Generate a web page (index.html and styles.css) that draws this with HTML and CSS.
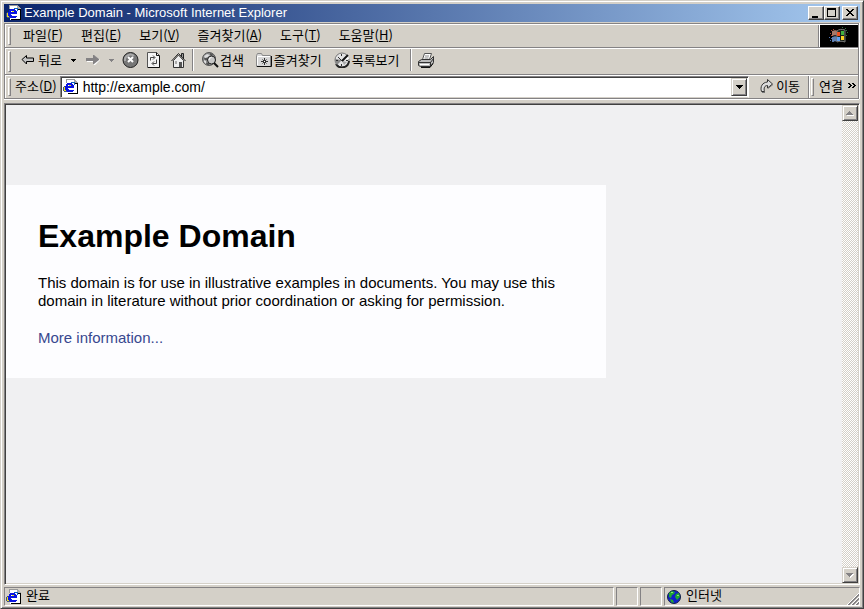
FILE: index.html
```html
<!DOCTYPE html>
<html lang="ko">
<head>
  <meta charset="UTF-8" />
  <meta name="viewport" content="width=device-width, initial-scale=1.0"/>
  <title>Example Domain - Microsoft Internet Explorer</title>
  <link rel="stylesheet" href="styles.css">
</head>
<body>
  <svg class="sprites" aria-hidden="true">
    <symbol id="icon-page" viewBox="0 0 16 16">
      <path d="M4 1h8l3 3v11H4z" fill="#fff"/>
      <path d="M3 0h9v1H4v3H3z" fill="#999"/>
      <path d="M11 1h2v1h1v1h1v1h-4z" fill="#aaa"/>
      <path d="M11 4h4v11H5v-1h9V5h-3z" fill="#000"/>
      <path d="M4 4h5v1h1v1h1v3H5v1h1v1h5v1h-1v1H4v-1H3v-1H2V7h1V5h1zM5 6v1h3V6z" fill="#0a14e0" fill-rule="evenodd"/>
      <path d="M8 3h4v3h-1V4H8z" fill="#1060c0"/>
      <path d="M1 7h1v1H1zM0 8h1v4H0zM0 12h4v1H1v-1z" fill="#405080"/>
      <path d="M1 8h1v3H1zM1 11h2v1H1zM6 6h2v1H6z" fill="#e8e020"/>
    </symbol>
    <symbol id="icon-down" viewBox="0 0 7 4">
      <path d="M0 0h7v1H6v1H5v1H4v1H3V3H2V2H1V1H0z"/>
    </symbol>
  </svg>

  <div class="window">
    <header class="title-bar">
      <svg class="icon"><use href="#icon-page"/></svg>
      <span class="title">Example Domain - Microsoft Internet Explorer</span>
      <div class="title-buttons">
        <button class="title-btn" aria-label="최소화"><svg width="12" height="10"><path d="M2 8h6v2H2z"/></svg></button>
        <button class="title-btn" aria-label="최대화"><svg width="12" height="10"><path d="M1 0h9v9H1zM2 2v6h7V2z" fill-rule="evenodd"/></svg></button>
        <button class="title-btn close" aria-label="닫기"><svg width="12" height="10"><path d="M2 1h2v1h1v1h2V2h1V1h2v1H9v1H8v1H7v1h1v1h1v1h1v1H8V7H7V6H5v1H4v1H2V7h1V6h1V5h1V4H4V3H3V2H2z"/></svg></button>
      </div>
    </header>

    <div class="rebar">
      <div class="row menu-row">
        <nav class="band menu-band">
          <span class="grip"></span>
          <button class="menu-btn">파일(<u>F</u>)</button>
          <button class="menu-btn">편집(<u>E</u>)</button>
          <button class="menu-btn">보기(<u>V</u>)</button>
          <button class="menu-btn">즐겨찾기(<u>A</u>)</button>
          <button class="menu-btn">도구(<u>T</u>)</button>
          <button class="menu-btn">도움말(<u>H</u>)</button>
        </nav>
        <div class="throbber">
          <svg width="22" height="18" viewBox="0 0 22 18">
            <path d="M3 3h1v1H3zM5 2h1v1H5zM2 6h1v1H2zM4 5h2v1H4zM3 8h2v1H3z" fill="#b04030"/>
            <path d="M1 10h1v1H1zM3 11h2v1H3zM2 13h1v1H2zM4 14h2v1H4z" fill="#5070b0"/>
            <path d="M14 0h1v1h-1zM17 1h1v1h-1zM18 3h1v1h-1zM19 5h1v1h-1zM18 8h1v1h-1z" fill="#307040"/>
            <path d="M4 4c3-1 4-1 6 0v5c-2-1-4-1-6 0z" fill="#a87868"/>
            <path d="M4 10c3-1 4-1 6 0v5c-2-1-4-1-6 0z" fill="#6080b0"/>
            <path d="M9 4c2-2 5-2 8-1v12c-3-1-5-1-8 0z" fill="#182018" stroke="#777" stroke-width="1"/>
            <path d="M9 5h3v4H9z" fill="#f05020"/>
            <path d="M13 4h3v4h-3z" fill="#40b040"/>
            <path d="M9 10h3v4H9z" fill="#60a0f0"/>
            <path d="M13 9h3v4h-3z" fill="#f8d020"/>
          </svg>
        </div>
      </div>

      <div class="row tool-row">
        <div class="band">
          <span class="grip"></span>
          <button class="tool-btn back">
            <svg width="14" height="12" viewBox="0 0 14 12"><path d="M1 5.500L5.500 1.500V4H12.500V7.500H5.500V10z" fill="#c4c4c4" stroke="#000"/></svg>
            뒤로
          </button>
          <button class="tool-btn drop" aria-label="뒤로 목록"><svg width="5" height="3"><path d="M0 0h5v1H4v1H3v1H2V2H1V1H0z"/></svg></button>
          <button class="tool-btn forward" aria-label="앞으로">
            <svg width="14" height="12" viewBox="0 0 14 12"><path d="M1 5h7V2h1l5 4-5 5H8V8H1z" fill="#fff"/><path d="M0 4h7V1h1l5 4v1l-5 4H7V7H0z" fill="#848284"/></svg>
          </button>
          <button class="tool-btn drop off" aria-label="앞으로 목록"><svg width="5" height="3"><path d="M0 0h5v1H4v1H3v1H2V2H1V1H0z"/></svg></button>
          <button class="tool-btn stop" aria-label="중지">
            <svg width="17" height="16" viewBox="0 0 17 16">
              <circle cx="8.500" cy="8" r="7.500" fill="#777" stroke="#222"/>
              <path d="M3 9a5.500 5.500 0 0 1 9-5" fill="none" stroke="#aaa" stroke-width="2"/>
              <path d="M6 5l5 5M11 5l-5 5" stroke="#fff" stroke-width="2"/>
            </svg>
          </button>
          <button class="tool-btn refresh" aria-label="새로 고침">
            <svg width="13" height="16" viewBox="0 0 13 16">
              <path d="M.500.500h9l3 3v12H.500z" fill="#f4f4f4" stroke="#555"/>
              <path d="M9.500.500v3h3M12.500 4v11.500H1" fill="none" stroke="#111"/>
              <path d="M3.500 8.500v-3h4M6 3.500l2 2-2 2M9.500 7.500v4h-4M7 9.500l-2 2 2 2" fill="none" stroke="#444"/>
            </svg>
          </button>
          <button class="tool-btn home" aria-label="홈">
            <svg width="15" height="16" viewBox="0 0 15 16">
              <path d="M2.500 8.500L7.500 3l5 5.500v7h-10z" fill="#eee" stroke="#333"/>
              <path d="M10.500 5V1.500h2V7" fill="#999" stroke="#222"/>
              <path d="M.500 9L7.500 1.500 14.500 9" fill="none" stroke="#222"/>
              <path d="M8 10h3v5H8z" fill="#555"/><path d="M4 9h2v3H4z" fill="#aaa"/>
            </svg>
          </button>
          <span class="divider"></span>
          <button class="tool-btn search">
            <svg width="17" height="16" viewBox="0 0 17 16">
              <circle cx="7" cy="7" r="6.500" fill="#8a8a8a" stroke="#555"/>
              <path d="M2 4l3-2 3 1-2 2-3 1zM2 8l2 1v3l-2-2z" fill="#ddd"/>
              <path d="M2 6h4v2H3zM8 1l3 1-1 2-2-1zM4 11h3v2H5z" fill="#555"/>
              <circle cx="9.500" cy="8" r="4" fill="#c8c8c8" stroke="#222" stroke-width="1"/>
              <path d="M7 8a2.500 2.500 0 0 1 2.500-2.500" fill="none" stroke="#fff"/>
              <path d="M12 11l4 4" stroke="#111" stroke-width="2"/>
            </svg>
            검색
          </button>
          <button class="tool-btn favorites">
            <svg width="16" height="14" viewBox="0 0 16 14">
              <path d="M.500 2.500l1-2h4l1 2h8v11H.500z" fill="#d8d8d8" stroke="#888"/>
              <path d="M15.500 3v10.500H1" fill="none" stroke="#111"/>
              <path d="M1.500 12V3.500H14" fill="none" stroke="#fff"/>
              <path d="M8.500 5v7M5 8.500h7M6.500 6.500l4 4M10.500 6.500l-4 4" stroke="#333"/>
              <path d="M8 8h1v1H8z" fill="#fff"/>
            </svg>
            즐겨찾기
          </button>
          <button class="tool-btn history">
            <svg width="16" height="16" viewBox="0 0 16 16">
              <circle cx="8" cy="8" r="7" fill="#e4e4e4" stroke="#777"/>
              <path d="M2 12A7 7 0 0 0 15 9" fill="none" stroke="#222" stroke-width="2"/>
              <path d="M1 7l7 1-5 5-2-3z" fill="#888"/>
              <path d="M8 8l6-6 1 5z" fill="#fff"/>
              <path d="M8 9l5 1-3 3z" fill="#aaa"/>
              <path d="M8 9l6-6" stroke="#111" stroke-width="2"/>
              <path d="M8 9L4 5M7.500 2v2M2 8.500h2M12 8.500h2M7.500 12v2" stroke="#333"/>
            </svg>
            목록보기
          </button>
          <span class="divider"></span>
          <button class="tool-btn print" aria-label="인쇄">
            <svg width="16" height="15" viewBox="0 0 16 15">
              <path d="M4.500 6.500l2-6h7l-2 6z" fill="#fff" stroke="#555"/>
              <path d="M7 3h4M6.500 5h4" stroke="#888"/>
              <path d="M.500 8.500l3-2h9l3-3v6l-3 4h-10l-2-1z" fill="#bbb" stroke="#333"/>
              <path d="M1 9.500h11.500l3-4M12.500 9v4" fill="none" stroke="#333"/>
              <path d="M2 11.500h9" stroke="#fff"/>
              <path d="M3 14.500h9l3-4" fill="none" stroke="#111"/>
            </svg>
          </button>
        </div>
      </div>

      <div class="row address-row">
        <form class="band address-band">
          <span class="grip"></span>
          <label for="address">주소(<u>D</u>)</label>
          <div class="combo">
            <svg class="icon"><use href="#icon-page"/></svg>
            <input type="text" id="address" value="http://example.com/">
            <button type="button" class="face-btn" aria-label="주소 목록"><svg width="7" height="4"><use href="#icon-down"/></svg></button>
          </div>
          <button type="button" class="tool-btn go">
            <svg width="14" height="15" viewBox="0 0 14 15">
              <path d="M1.500 13.500C0 9 2 4.500 7.500 4V1.500L12.500 6 7.500 10V7.500C4.500 7.500 3.500 10 4.500 13.500z" fill="#ddd" stroke="#333"/>
              <path d="M5 14.500h-3M8 10.500l5-4" stroke="#777"/>
            </svg>
            이동
          </button>
        </form>
        <div class="band links-band">
          <span class="grip"></span>
          <button class="tool-btn links">연결</button>
          <button class="tool-btn chevron" aria-label="더 보기"><svg width="8" height="5"><path d="M0 0h2v1h1v1h1v1H3v1H2v1H0V4h1V3h1V2H1V1H0zM4 0h2v1h1v1h1v1H7v1H6v1H4V4h1V3h1V2H5V1H4z"/></svg></button>
        </div>
      </div>
    </div>

    <div class="view">
      <main class="page">
        <div class="card">
          <h1>Example Domain</h1>
          <p>This domain is for use in illustrative examples in documents. You may use this domain in literature without prior coordination or asking for permission.</p>
          <p><a href="#">More information...</a></p>
        </div>
      </main>
      <div class="scrollbar">
        <button class="face-btn" aria-label="위로"><svg width="8" height="5"><path d="M4 1h1v1h1v1h1v1h1v1H1V4h1V3h1V2h1z" fill="#fff"/><path d="M3 0h1v1h1v1h1v1h1v1H0V3h1V2h1V1h1z" fill="#848284"/></svg></button>
        <button class="face-btn" aria-label="아래로"><svg width="8" height="5"><path d="M1 1h7v1H7v1H6v1H5v1H4V4H3V3H2V2H1z" fill="#fff"/><path d="M0 0h7v1H6v1H5v1H4v1H3V3H2V2H1V1H0z" fill="#848284"/></svg></button>
      </div>
    </div>

    <footer class="status-bar">
      <div class="panel status-text">
        <svg class="icon"><use href="#icon-page"/></svg>
        <span class="label">완료</span>
      </div>
      <div class="panel small"></div>
      <div class="panel small"></div>
      <div class="panel zone">
        <svg width="14" height="14" viewBox="0 0 14 14">
          <circle cx="7" cy="7" r="6.500" fill="#1020c8" stroke="#102040"/>
          <path d="M2 3l3-2 3 1-1 2-2 1-1 3-2-1zM9 4l3-1 1 4-3 3-2-3zM3 9l3 1 1 3-3-1z" fill="#20a830"/>
          <path d="M4 2h2v1H4zM10 5h2v1h-2z" fill="#90e070"/>
        </svg>
        <span class="label">인터넷</span>
        <svg class="resize" width="12" height="12"><path d="M0 12L12 0M4 12l8-8M8 12l4-4" stroke="#fff"/><path d="M1 12L12 1M2 12L12 2M5 12l7-7M6 12l6-6M9 12l3-3M10 12l2-2" stroke="#848284"/></svg>
      </div>
    </footer>
  </div>
</body>
</html>
```

FILE: styles.css
```css
* {
  box-sizing: border-box;
}

body {
  margin: 0;
  background: #d4d0c8;
  color: #000;
  font-family: "Noto Sans CJK KR", sans-serif;
  font-size: 13px;
  line-height: 16px;
}

button {
  margin: 0;
  padding: 0;
  border: none;
  background: none;
  color: inherit;
  font: inherit;
  white-space: nowrap;
}

svg {
  display: block;
  flex: none;
}

.sprites {
  position: absolute;
  width: 0;
  height: 0;
}

.icon {
  width: 16px;
  height: 16px;
}

.window {
  display: flex;
  flex-direction: column;
  height: 100vh;
  padding: 3px 3px 2px;
  border: 1px solid;
  border-color: #d4d0c8 #404040 #404040 #d4d0c8;
  box-shadow: inset 1px 1px #fff, inset -1px -1px #848284;
}

/* title bar */
.title-bar {
  display: flex;
  align-items: center;
  height: 18px;
  padding: 0 2px;
  background: linear-gradient(to right, #0a246a, #a6caf0);
  color: #fff;
}

.title {
  flex: 1;
  margin-left: 2px;
  font-family: "Liberation Sans", sans-serif;
}

.title-buttons {
  display: flex;
}

.title-btn,
.face-btn {
  display: flex;
  align-items: center;
  justify-content: center;
  width: 16px;
  height: 14px;
  background: #d4d0c8;
  border: 1px solid;
  border-color: #fff #404040 #404040 #fff;
  box-shadow: inset -1px -1px #848284;
  color: #000;
}

.title-btn.close {
  margin-left: 2px;
}

.face-btn {
  height: 16px;
  border-color: #d4d0c8 #404040 #404040 #d4d0c8;
  box-shadow: inset 1px 1px #fff, inset -1px -1px #848284;
}

/* toolbars */
.rebar {
  margin: 1px 1px 0 0;
  border: 1px solid #848284;
  box-shadow: 0 1px #fff, 1px 0 #fff;
}

.row {
  display: flex;
  border-top: 1px solid #fff;
  border-left: 1px solid #fff;
}

.row + .row {
  box-shadow: 0 -1px #848284;
  margin-top: 1px;
}

.band {
  display: flex;
  align-items: center;
  flex: 1;
  padding: 0 0 3px 2px;
}

.grip {
  align-self: stretch;
  width: 3px;
  margin: 2px 0 -1px;
  border: 1px solid;
  border-color: #fff #848284 #848284 #fff;
}

.menu-row,
.address-row {
  height: 23px;
}

.tool-row {
  height: 26px;
}

.menu-btn {
  margin-left: 18px;
}

.menu-btn:first-of-type {
  margin-left: 12px;
}

.menu-band {
  border-right: 1px solid #848284;
}

.throbber {
  display: flex;
  align-items: center;
  justify-content: center;
  width: 39px;
  border-left: 1px solid #fff;
  background: #000;
}

.tool-btn {
  display: flex;
  align-items: center;
  gap: 2px;
}

.back {
  gap: 3px;
  margin-left: 10px;
}

.drop {
  margin-left: 9px;
}

.drop.off {
  fill: #848284;
}

.forward {
  margin-left: 10px;
}

.search {
  gap: 1px;
  margin-left: 8px;
}

.stop,
.refresh {
  margin-left: 8px;
}

.home {
  margin-left: 11px;
}

.divider {
  width: 2px;
  height: 22px;
  margin-left: 6px;
  border-left: 1px solid #848284;
  border-right: 1px solid #fff;
}

.favorites,
.history {
  margin-left: 12px;
}

.history + .divider {
  margin-left: 10px;
}

.print {
  margin-left: 6px;
}

.address-band label {
  margin: 0 3px 0 4px;
}

.combo {
  display: flex;
  align-items: center;
  align-self: flex-start;
  flex: 1;
  height: 22px;
  padding: 1px;
  background: #fff;
  border: 1px solid;
  border-color: #848284 #fff #d4d0c8 #848284;
  box-shadow: inset 1px 1px #404040;
}

.combo .icon {
  margin-left: 1px;
}

.combo input {
  flex: 1;
  min-width: 0;
  margin: 0 0 0 4px;
  padding: 0;
  border: none;
  outline: none;
  background: none;
  font: 14px "Liberation Sans", sans-serif;
}

.combo .face-btn {
  height: 18px;
}

.go {
  margin: 0 8px 0 11px;
}

.links-band {
  flex: none;
  padding-right: 2px;
  border-left: 1px solid #848284;
  box-shadow: inset 1px 0 #fff;
}

.links {
  margin: 0 5px;
}

/* page view */
.view {
  display: flex;
  flex: 1;
  min-height: 0;
  margin-top: 4px;
  padding: 1px;
  border: 1px solid;
  border-color: #848284 #fff #fff #848284;
  box-shadow: inset 1px 1px #404040;
}

.page {
  flex: 1;
  background: #f0f0f2;
  overflow: hidden;
  font-family: "Liberation Sans", Arial, sans-serif;
  font-size: 15px;
  line-height: 18px;
}

.card {
  max-width: 600px;
  margin-top: 80px;
  padding: 33px 32px 31px;
  background: #fdfdff;
}

.card h1 {
  margin: 0 0 20px;
  font-size: 32px;
  line-height: 36px;
}

.card p {
  margin: 0;
}

.card p + p {
  margin-top: 19px;
}

.card a {
  color: #38488f;
  text-decoration: none;
}

.scrollbar {
  display: flex;
  flex-direction: column;
  justify-content: space-between;
  width: 16px;
  background: conic-gradient(#fff 25%, #d4d0c8 0 50%, #fff 0 75%, #d4d0c8 0) 0 0 / 2px 2px;
}

/* status bar */
.status-bar {
  display: flex;
  gap: 2px;
  margin-top: 2px;
}

.panel {
  display: flex;
  align-items: center;
  height: 19px;
  border: 1px solid;
  border-color: #848284 #fff #fff #848284;
}

.label {
  padding-bottom: 3px;
}

.status-text {
  flex: 1;
  gap: 4px;
  padding-left: 1px;
}

.small {
  width: 22px;
}

.zone {
  width: 196px;
  gap: 5px;
  padding-left: 2px;
}

.resize {
  align-self: flex-end;
  margin-left: auto;
}
```
